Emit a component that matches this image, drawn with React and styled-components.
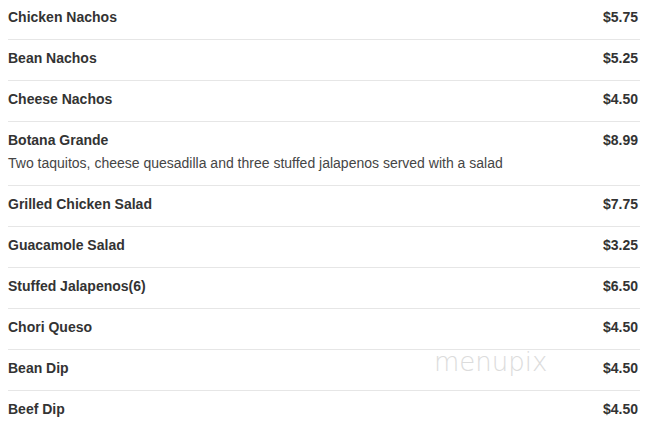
import styled, { createGlobalStyle } from "styled-components";

const GlobalStyle = createGlobalStyle`
  html, body {
    margin: 0;
    padding: 0;
    background: #fff;
  }
  body {
    font-family: "Liberation Sans", Arial, sans-serif;
  }
`;

const Page = styled.div`
  position: relative;
  width: 668px;
  height: 445px;
  overflow: hidden;
  background: #fff;
`;

const List = styled.ul`
  list-style: none;
  margin: -1px 0 0;
  padding: 0 0 0 8px;
  width: 632px;
`;

const Row = styled.li`
  display: flex;
  flex-direction: column;
  padding: 10px 0 14px;
  border-bottom: 1px solid ${(p) => (p.$last ? "transparent" : "#e6e6e6")};
`;

const Head = styled.div`
  display: flex;
  justify-content: space-between;
  align-items: baseline;
  padding-right: 2px;
`;

const Name = styled.span`
  font-size: 14px;
  line-height: 16px;
  font-weight: 700;
  color: #333;
`;

const Price = styled.span`
  font-size: 14px;
  line-height: 16px;
  font-weight: 700;
  color: #333;
`;

const Desc = styled.p`
  margin: 7px 0 0;
  font-size: 14px;
  line-height: 16px;
  color: #454545;
`;

const Watermark = styled.div`
  position: absolute;
  left: 434px;
  top: 347px;
  font-family: "DejaVu Sans", sans-serif;
  font-weight: 200;
  font-size: 26px;
  color: #dcdcdc;
  pointer-events: none;
`;

const items = [
  { name: "Chicken Nachos", price: "$5.75" },
  { name: "Bean Nachos", price: "$5.25" },
  { name: "Cheese Nachos", price: "$4.50" },
  {
    name: "Botana Grande",
    price: "$8.99",
    desc: "Two taquitos, cheese quesadilla and three stuffed jalapenos served with a salad",
  },
  { name: "Grilled Chicken Salad", price: "$7.75" },
  { name: "Guacamole Salad", price: "$3.25" },
  { name: "Stuffed Jalapenos(6)", price: "$6.50" },
  { name: "Chori Queso", price: "$4.50" },
  { name: "Bean Dip", price: "$4.50" },
  { name: "Beef Dip", price: "$4.50" },
];

const App = () => {
  return (
    <Page>
      <GlobalStyle />
      <List>
        {items.map((item, i) => (
          <Row key={item.name} $last={i === items.length - 1}>
            <Head>
              <Name>{item.name}</Name>
              <Price>{item.price}</Price>
            </Head>
            {item.desc && <Desc>{item.desc}</Desc>}
          </Row>
        ))}
      </List>
      <Watermark>menupix</Watermark>
    </Page>
  );
};

export default App;
